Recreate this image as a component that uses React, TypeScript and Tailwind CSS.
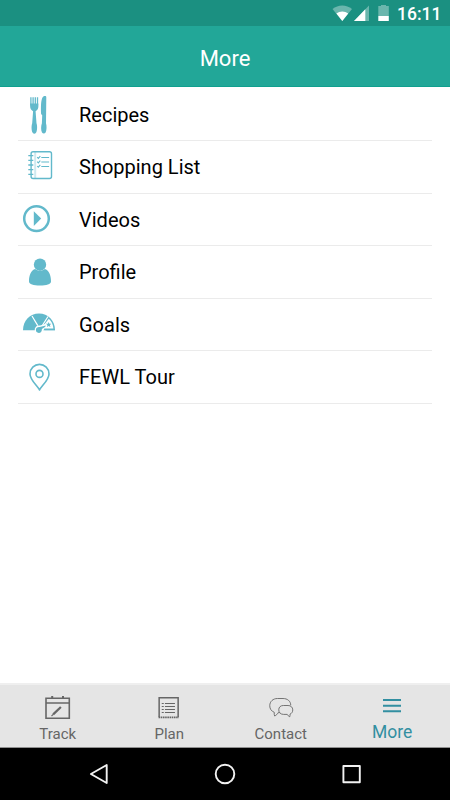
import type { ReactNode } from "react";

const TEAL = "#62b9cb";

function ForkKnife() {
  return (
    <svg className="h-[52px] w-[61px] shrink-0" viewBox="18 88 61 52" fill={TEAL}>
      <path d="M30.9 97.3v8M33.1 97.3v8M35.3 97.3v8M37.5 97.3v8" stroke={TEAL} strokeWidth="1.3" />
      <path d="M30.1 103.5h8.2l.1 2.5c0 2.7-.9 4.2-2.8 5.2l.9 12c.9 2.4.9 7.4-.5 9.6-.9 1.2-2.4 1.2-3.3 0-1.4-2.2-1.4-7.2-.5-9.6l.9-12c-2-1-3-2.5-3-5.2z" />
      <path d="M45 96c.9 0 1.3.5 1.3 1.3l-.3 26c.8 2.6.8 7-.4 9.3-.9 1.3-2.7 1.3-3.6 0-1.2-2.2-1.1-6.7-.1-9.3l.3-8-1.1-1.2c-.3-6.6-.2-12.6 1.1-16 .6-1.5 1.6-2.1 2.8-2.1z" />
    </svg>
  );
}

function Notebook() {
  return (
    <svg className="h-[52px] w-[61px] shrink-0" viewBox="18 141 61 52" fill="none" stroke={TEAL}>
      <path d="M35.2 152v26" stroke="#cfe9ef" strokeWidth="2" />
      <rect x="31.1" y="151.7" width="20.4" height="26.8" rx="2" strokeWidth="1.4" />
      <path d="M28.3 155.7h5M28.3 160.3h5M28.3 165h5M28.3 169.7h5M28.3 174.3h5" strokeWidth="1.3" />
      <path d="M41.3 157.5h7.8M41.3 162h7.8M41.3 166.5h7.8" strokeWidth="1.2" />
      <path d="M37.2 157.2l1.1 1.2 2-2.3M37.2 161.7l1.1 1.2 2-2.3M37.2 166l1.1 1.2 2-2.3" strokeWidth="1.1" />
    </svg>
  );
}

function Play() {
  return (
    <svg className="h-[52px] w-[61px] shrink-0" viewBox="18 193 61 52">
      <circle cx="36.5" cy="218.6" r="12.3" fill="none" stroke={TEAL} strokeWidth="2.5" />
      <path d="M33.8 211.3v14.6l7.4-7.3z" fill={TEAL} />
    </svg>
  );
}

function Person() {
  return (
    <svg className="h-[52px] w-[61px] shrink-0" viewBox="18 245.5 61 52" fill={TEAL}>
      <circle cx="40" cy="264.2" r="6.2" />
      <path d="M35.2 268.6c2.8 2.4 6.8 2.4 9.6 0 4 1.2 6.2 6 6.2 12.4 0 2.7-4.6 4-11 4s-11-1.3-11-4c0-6.4 2.2-11.2 6.2-12.4z" />
    </svg>
  );
}

function Gauge() {
  return (
    <svg className="h-[52px] w-[61px] shrink-0" viewBox="18 298 61 52">
      <path d="M23 330.2c0-9.6 6.9-16.7 16-16.7s16 7.1 16 16.7z" fill={TEAL} />
      <path d="M43.8 325.3l5-6.6c2.7 2.4 4.3 5.8 4.6 9.9h-8.8z" fill="#fff" />
      <path d="M37.8 325.6L32 316M42 326l6-9.5" stroke="#fff" strokeWidth="1.2" />
      <path d="M34.8 331a4.4 4.4 0 0 1 5.2-5.4l5.4-1.7.6 2.2-3 4.9z" fill="#fff" />
      <path d="M45.8 325.6l-.5 1.2-3.4 2.2c.1 2.6-1.3 3.9-3.1 3.9a3 3 0 0 1-2.9-3.1c.1-1.9 1.8-3 3.9-2.7z" fill={TEAL} />
      <path d="M48.6 321.9l.8 1.8 2 .1-1.5 1.3.5 1.9-1.8-1-1.7 1 .5-1.9-1.5-1.3 2-.1z" fill={TEAL} />
      <path d="M44.5 329.6H55" stroke={TEAL} strokeWidth="1.2" />
    </svg>
  );
}

function Pin() {
  return (
    <svg className="h-[52px] w-[61px] shrink-0" viewBox="18 350.5 61 52" fill="none" stroke={TEAL} strokeWidth="1.6">
      <path d="M39.5 389.5c-1.5-3.6-9.5-10-9.5-16.1a9.5 9.5 0 0 1 19 0c0 6.1-8 12.5-9.5 16.1z" strokeLinejoin="round" />
      <circle cx="39.5" cy="373.4" r="3.5" />
    </svg>
  );
}

const rows: { label: string; icon: ReactNode }[] = [
  { label: "Recipes", icon: <ForkKnife /> },
  { label: "Shopping List", icon: <Notebook /> },
  { label: "Videos", icon: <Play /> },
  { label: "Profile", icon: <Person /> },
  { label: "Goals", icon: <Gauge /> },
  { label: "FEWL Tour", icon: <Pin /> },
];

function StatusBar() {
  return (
    <div className="flex h-[26px] items-center bg-[#1b9081] pl-[332px] text-white">
      <svg className="h-[26px] w-[64px] shrink-0" viewBox="332 0 64 26" fill="#fff">
        <path d="M332.5 9c5.6-4.7 13.9-4.7 19.5 0l-9.7 12z" opacity=".35" />
        <path d="M336.4 13.6c3.4-2.7 8.4-2.7 11.8 0l-5.9 7.4z" />
        <path d="M369 5.5V21h-15z" opacity=".35" />
        <path d="M365.3 9.3V21H354z" />
        <path d="M378.3 6h2.7V5h5v1h2.8v10h-10.5z" opacity=".35" />
        <path d="M378.3 16h10.5v5h-10.5z" />
      </svg>
      <span className="ml-[1px] mt-[3px] text-[17.5px] font-medium leading-none">16:11</span>
    </div>
  );
}

function TrackIcon() {
  return (
    <svg className="h-[28px] w-[28px]" viewBox="44 694 28 28" fill="none" stroke="#666">
      <path d="M46 698.3h23.3v20H46z" strokeWidth="1.6" />
      <path d="M46 703h23.3" strokeWidth="1.5" />
      <path d="M52.2 696v3M63 696v3" strokeWidth="2" />
      <path d="M53.2 714.4l7.7-7.4" strokeWidth="2.2" />
      <path d="M51.5 716l2-1.9" strokeWidth="1.1" />
    </svg>
  );
}

function PlanIcon() {
  return (
    <svg className="h-[28px] w-[28px]" viewBox="155.25 694 28 28" fill="none" stroke="#666">
      <path d="M159.4 717V697.8h19V717" strokeWidth="1.5" />
      <path d="M158.8 717.4h20.3" strokeWidth="1.6" strokeDasharray="1.6 .6" />
      <path d="M162 703.5h2M162 706.5h2M162 709.5h2M162 712.5h2M165.2 703.5h10M165.2 706.5h10M165.2 709.5h10M165.2 712.5h10" strokeWidth="1.2" />
    </svg>
  );
}

function ContactIcon() {
  return (
    <svg className="h-[28px] w-[28px]" viewBox="266.75 694 28 28" fill="none" stroke="#666" strokeWidth=".9" strokeLinejoin="round">
      <path d="M290.5 705.3c0-4.3-3.5-6.8-7.7-6.8h-5.6c-4.4 0-7.7 3-7.7 7.2 0 3.2 1.7 5.5 4.5 6.6-.1 1.7 0 2.7.4 3.7 1.6-.6 2.7-1.9 3.4-3.3h1.3" />
      <path d="M278.5 709.8c0-2.7 1.9-4.3 4.6-4.3h4.7c2.8 0 4.7 1.8 4.7 4.4 0 2-1 3.5-2.7 4.2 0 1 0 1.9-.3 2.7-1.2-.5-2-1.4-2.5-2.4h-3.6c-3 0-4.9-1.8-4.9-4.6z" />
    </svg>
  );
}

function Tab({ icon, label }: { icon: ReactNode; label: string }) {
  return (
    <div className="flex w-[111.5px] flex-col items-center pt-[9px] text-[#666]">
      {icon}
      <span className="mt-[4px] text-[15px] leading-[17px]">{label}</span>
    </div>
  );
}

export default function App() {
  return (
    <div className="flex h-[800px] w-[450px] flex-col overflow-hidden bg-white font-['Roboto',sans-serif]">
      <StatusBar />
      <header className="flex h-[61px] items-center justify-center border-b border-[#10a08f] bg-[#22a798] pt-[4px] text-[22px] text-white">
        More
      </header>
      <main className="flex-1 px-[18px] pt-[1.5px]">
        {rows.map((row) => (
          <div key={row.label} className="flex h-[52.5px] items-center border-b border-[#ebebeb]">
            {row.icon}
            <span className="pt-[1px] text-[20px] text-black">{row.label}</span>
          </div>
        ))}
      </main>
      <nav className="flex h-[64px] border-t-2 border-[#efefef] bg-[#e5e5e5] pl-[2px]">
        <Tab icon={<TrackIcon />} label="Track" />
        <Tab icon={<PlanIcon />} label="Plan" />
        <Tab icon={<ContactIcon />} label="Contact" />
        <div className="flex w-[111.5px] flex-col items-center pt-[14px] text-[#328fa1]">
          <svg className="h-[14px] w-[18px]" viewBox="0 0 18 14" stroke="currentColor" strokeWidth="2">
            <path d="M0 1h18M0 6.7h18M0 12.2h18" />
          </svg>
          <span className="mt-[9px] text-[17.5px] leading-[20px]">More</span>
        </div>
      </nav>
      <footer className="h-[53px] border-t border-[#8f8f8f] bg-black">
        <svg className="h-[52px] w-[450px]" viewBox="0 748 450 52" fill="none" stroke="#f2f2f2" strokeWidth="1.9" strokeLinejoin="round">
          <path d="M106.7 765v18l-15.8-9z" />
          <circle cx="225" cy="774" r="9.3" />
          <path d="M343.4 766h16.4v16.3h-16.4z" />
        </svg>
      </footer>
    </div>
  );
}
